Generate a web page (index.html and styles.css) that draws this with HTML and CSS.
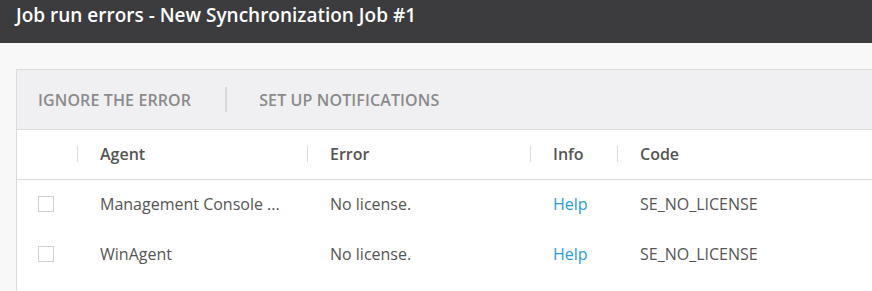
FILE: index.html
```html
<!DOCTYPE html>
<html lang="en">
<head>
    <meta charset="UTF-8">
    <title>Job run errors</title>
    <link rel="stylesheet" href="styles.css">
</head>
<body>
    <div class="title-bar">
        <h1>Job run errors - New Synchronization Job #1</h1>
    </div>
    <div class="content">
        <div class="panel">
            <div class="toolbar">
                <button class="tool">Ignore the error</button>
                <span class="tool-sep"></span>
                <button class="tool">Set up notifications</button>
            </div>
            <table class="grid">
                <colgroup>
                    <col class="c-check">
                    <col class="c-agent">
                    <col class="c-error">
                    <col class="c-info">
                    <col>
                </colgroup>
                <thead>
                    <tr>
                        <th></th>
                        <th><div class="th-cell">Agent</div></th>
                        <th><div class="th-cell">Error</div></th>
                        <th><div class="th-cell">Info</div></th>
                        <th><div class="th-cell">Code</div></th>
                    </tr>
                </thead>
                <tbody>
                    <tr>
                        <td><span class="check"></span></td>
                        <td class="pad">Management Console ...</td>
                        <td class="pad">No license.</td>
                        <td class="pad"><a href="#">Help</a></td>
                        <td class="pad">SE_NO_LICENSE</td>
                    </tr>
                    <tr>
                        <td><span class="check"></span></td>
                        <td class="pad">WinAgent</td>
                        <td class="pad">No license.</td>
                        <td class="pad"><a href="#">Help</a></td>
                        <td class="pad">SE_NO_LICENSE</td>
                    </tr>
                </tbody>
            </table>
        </div>
    </div>
</body>
</html>
```

FILE: styles.css
```css
body {
    margin: 0;
    font-family: "Open Sans", "Liberation Sans", sans-serif;
    background: #f8f8f9;
    color: #555;
    overflow: hidden;
}
.title-bar {
    background: #3c3c3e;
    height: 43px;
    padding: 0 16px;
    display: flex;
    align-items: center;
}
.title-bar h1 {
    margin: 0;
    color: #fff;
    font-size: 19px;
    font-weight: 600;
    margin-top: -14px;
}
.content {
    padding: 26px 0 0 16px;
}
.panel {
    border: 1px solid #dcdcde;
    border-right: none;
    border-bottom: none;
    background: #fff;
    height: 221px;
}
.toolbar {
    background: #f0f0f2;
    border-bottom: 1px solid #dcdcde;
    height: 59px;
    display: flex;
    align-items: center;
    padding-left: 21px;
}
.tool {
    border: none;
    background: none;
    padding: 0;
    font-family: inherit;
    font-size: 16px;
    font-weight: 600;
    letter-spacing: 0.12px;
    text-transform: uppercase;
    color: #8a8a8c;
    cursor: pointer;
}
.tool-sep {
    width: 2px;
    height: 25px;
    background: #d9d9db;
    margin: 0 32px 0 34px;
}
.grid {
    border-collapse: collapse;
    width: 100%;
    table-layout: fixed;
    font-size: 16px;
}
.c-check { width: 60px; }
.c-agent { width: 230px; }
.c-error { width: 223px; }
.c-info { width: 87px; }
.grid th {
    height: 47px;
    padding: 0 0 2px;
    text-align: left;
    font-weight: 600;
    color: #555;
    border-bottom: 1px solid #dcdcde;
}
.th-cell {
    border-left: 1px solid #dcdcde;
    height: 16px;
    line-height: 16px;
    padding-left: 22px;
}
.grid td {
    height: 48px;
    padding: 0 0 2px;
    white-space: nowrap;
}
.grid td.pad {
    padding-left: 23px;
}
.check {
    display: block;
    width: 14px;
    height: 14px;
    border: 1px solid #d0d0d0;
    margin-left: 21px;
}
.grid a {
    color: #2a9dd8;
    text-decoration: none;
}
```
